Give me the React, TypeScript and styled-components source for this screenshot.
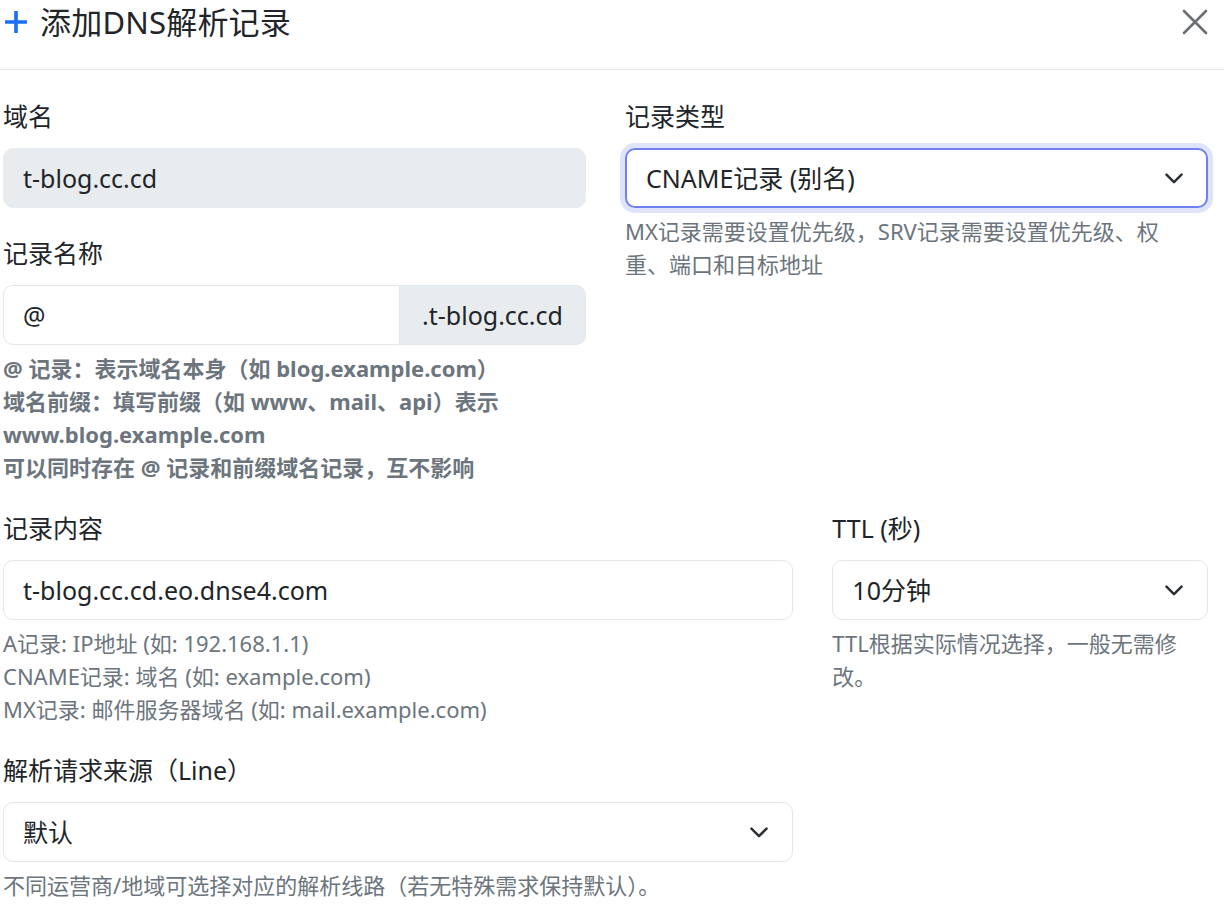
import React from "react";
import styled, { createGlobalStyle, css } from "styled-components";

const GlobalStyle = createGlobalStyle`
  body {
    margin: 0;
    background: #fff;
    color: #212529;
    font-family: "Noto Sans", "Noto Sans CJK SC", sans-serif;
  }
`;

const Page = styled.div`
  width: 1224px;
`;

const Header = styled.div`
  display: flex;
  justify-content: space-between;
  align-items: flex-start;
  height: 69px;
  border-bottom: 1px solid #e6e8ec;
  padding: 0 16px 0 5px;
`;

const Title = styled.h5`
  display: flex;
  align-items: center;
  gap: 13px;
  margin: 0;
  font-size: 31px;
  line-height: 44px;
  font-weight: 400;
  letter-spacing: 0.2px;
  color: #212529;
`;

const CloseButton = styled.button`
  display: flex;
  margin-top: 9px;
  padding: 0;
  border: none;
  background: none;
  cursor: pointer;
`;

const Body = styled.div`
  padding: 27px 0 0 3px;
  width: 1205px;
`;

const Grid = styled.div`
  display: grid;
  grid-template-columns: repeat(12, 1fr);
  column-gap: 39px;
  row-gap: 25px;
`;

const Col = styled.div<{ $span: number }>`
  grid-column: span ${(p) => p.$span};
  display: flex;
  flex-direction: column;
  gap: 26px;
  min-width: 0;
`;

const Field = styled.div`
  display: flex;
  flex-direction: column;
`;

const Label = styled.label`
  font-size: 25px;
  line-height: 38px;
  margin-bottom: 13px;
  color: #212529;
`;

const controlBase = css`
  box-sizing: border-box;
  width: 100%;
  height: 60px;
  padding: 0 19px;
  border: 1px solid #e3e6ea;
  border-radius: 10px;
  background: #fff;
  color: #212529;
  font-family: inherit;
  font-size: 25px;
  outline: none;
`;

const TextInput = styled.input<{ $joined?: boolean }>`
  ${controlBase}
  &:disabled {
    background: #e9ecef;
    border-color: #e9ecef;
    color: #212529;
    -webkit-text-fill-color: #212529;
  }
  ${(p) =>
    p.$joined &&
    css`
      flex: 1;
      border-top-right-radius: 0;
      border-bottom-right-radius: 0;
    `}
`;

const InputGroup = styled.div`
  display: flex;
`;

const Addon = styled.span`
  box-sizing: border-box;
  flex-shrink: 0;
  width: 186px;
  height: 60px;
  display: flex;
  align-items: center;
  justify-content: center;
  background: #e9ecef;
  border: 1px solid #e3e6ea;
  border-left: none;
  border-radius: 0 10px 10px 0;
  font-size: 25px;
  color: #212529;
`;

const SelectWrap = styled.div`
  position: relative;
`;

const Select = styled.select<{ $focused?: boolean }>`
  ${controlBase}
  appearance: none;
  -webkit-appearance: none;
  ${(p) =>
    p.$focused &&
    css`
      border: 2px solid #6f80f0;
      box-shadow: 0 0 0 5px #dfe3fc;
      padding-left: 19px;
    `}
`;

const Chevron = styled.svg`
  position: absolute;
  right: 23px;
  top: 50%;
  transform: translateY(-50%);
  pointer-events: none;
`;

const Help = styled.div<{ $bold?: boolean; $maxWidth?: number }>`
  margin-top: 7px;
  font-size: 22px;
  line-height: 33px;
  color: #6c757d;
  font-weight: ${(p) => (p.$bold ? 700 : 400)};
  max-width: ${(p) => (p.$maxWidth ? `${p.$maxWidth}px` : "none")};
`;

const ChevronIcon = () => (
  <Chevron width="22" height="22" viewBox="0 0 16 16" fill="none">
    <path
      d="M2.5 5.5l5.5 5.5 5.5-5.5"
      stroke="#2b3035"
      strokeWidth="1.8"
      strokeLinecap="round"
      strokeLinejoin="round"
    />
  </Chevron>
);

const SelectBox = ({
  value,
  options,
  focused
}: {
  value: string;
  options: string[];
  focused?: boolean;
}) => (
  <SelectWrap>
    <Select defaultValue={value} $focused={focused}>
      {options.map((o) => (
        <option key={o} value={o}>
          {o}
        </option>
      ))}
    </Select>
    <ChevronIcon />
  </SelectWrap>
);

const App = () => {
  return (
    <Page>
      <GlobalStyle />
      <Header>
        <Title>
          <svg width="22" height="22" viewBox="0 0 22 22">
            <path
              d="M11 1v20M1 11h20"
              stroke="#1a6ef5"
              strokeWidth="3.6"
              strokeLinecap="round"
            />
          </svg>
          添加DNS解析记录
        </Title>
        <CloseButton aria-label="关闭">
          <svg width="26" height="26" viewBox="0 0 26 26">
            <path
              d="M2 2l22 22M24 2L2 24"
              stroke="#6b6f73"
              strokeWidth="2.6"
              strokeLinecap="round"
            />
          </svg>
        </CloseButton>
      </Header>
      <Body>
        <Grid>
          <Col $span={6}>
            <Field>
              <Label>域名</Label>
              <TextInput value="t-blog.cc.cd" disabled readOnly />
            </Field>
            <Field>
              <Label>记录名称</Label>
              <InputGroup>
                <TextInput $joined defaultValue="@" />
                <Addon>.t-blog.cc.cd</Addon>
              </InputGroup>
              <Help $bold>
                @ 记录：表示域名本身（如 blog.example.com）
                <br />
                域名前缀：填写前缀（如 www、mail、api）表示 www.blog.example.com
                <br />
                可以同时存在 @ 记录和前缀域名记录，互不影响
              </Help>
            </Field>
          </Col>
          <Col $span={6}>
            <Field>
              <Label>记录类型</Label>
              <SelectBox
                focused
                value="CNAME记录 (别名)"
                options={[
                  "A记录 (IPv4地址)",
                  "AAAA记录 (IPv6地址)",
                  "CNAME记录 (别名)",
                  "MX记录 (邮件)",
                  "TXT记录 (文本)",
                  "SRV记录 (服务)"
                ]}
              />
              <Help $maxWidth={555}>
                MX记录需要设置优先级，SRV记录需要设置优先级、权重、端口和目标地址
              </Help>
            </Field>
          </Col>
          <Col $span={8}>
            <Field>
              <Label>记录内容</Label>
              <TextInput defaultValue="t-blog.cc.cd.eo.dnse4.com" />
              <Help>
                A记录: IP地址 (如: 192.168.1.1)
                <br />
                CNAME记录: 域名 (如: example.com)
                <br />
                MX记录: 邮件服务器域名 (如: mail.example.com)
              </Help>
            </Field>
          </Col>
          <Col $span={4}>
            <Field>
              <Label>TTL (秒)</Label>
              <SelectBox
                value="10分钟"
                options={["1分钟", "5分钟", "10分钟", "30分钟", "1小时"]}
              />
              <Help>TTL根据实际情况选择，一般无需修改。</Help>
            </Field>
          </Col>
          <Col $span={8}>
            <Field>
              <Label>解析请求来源（Line）</Label>
              <SelectBox
                value="默认"
                options={["默认", "电信", "联通", "移动", "境外"]}
              />
              <Help>
                不同运营商/地域可选择对应的解析线路（若无特殊需求保持默认）。
              </Help>
            </Field>
          </Col>
        </Grid>
      </Body>
    </Page>
  );
};

export default App;
